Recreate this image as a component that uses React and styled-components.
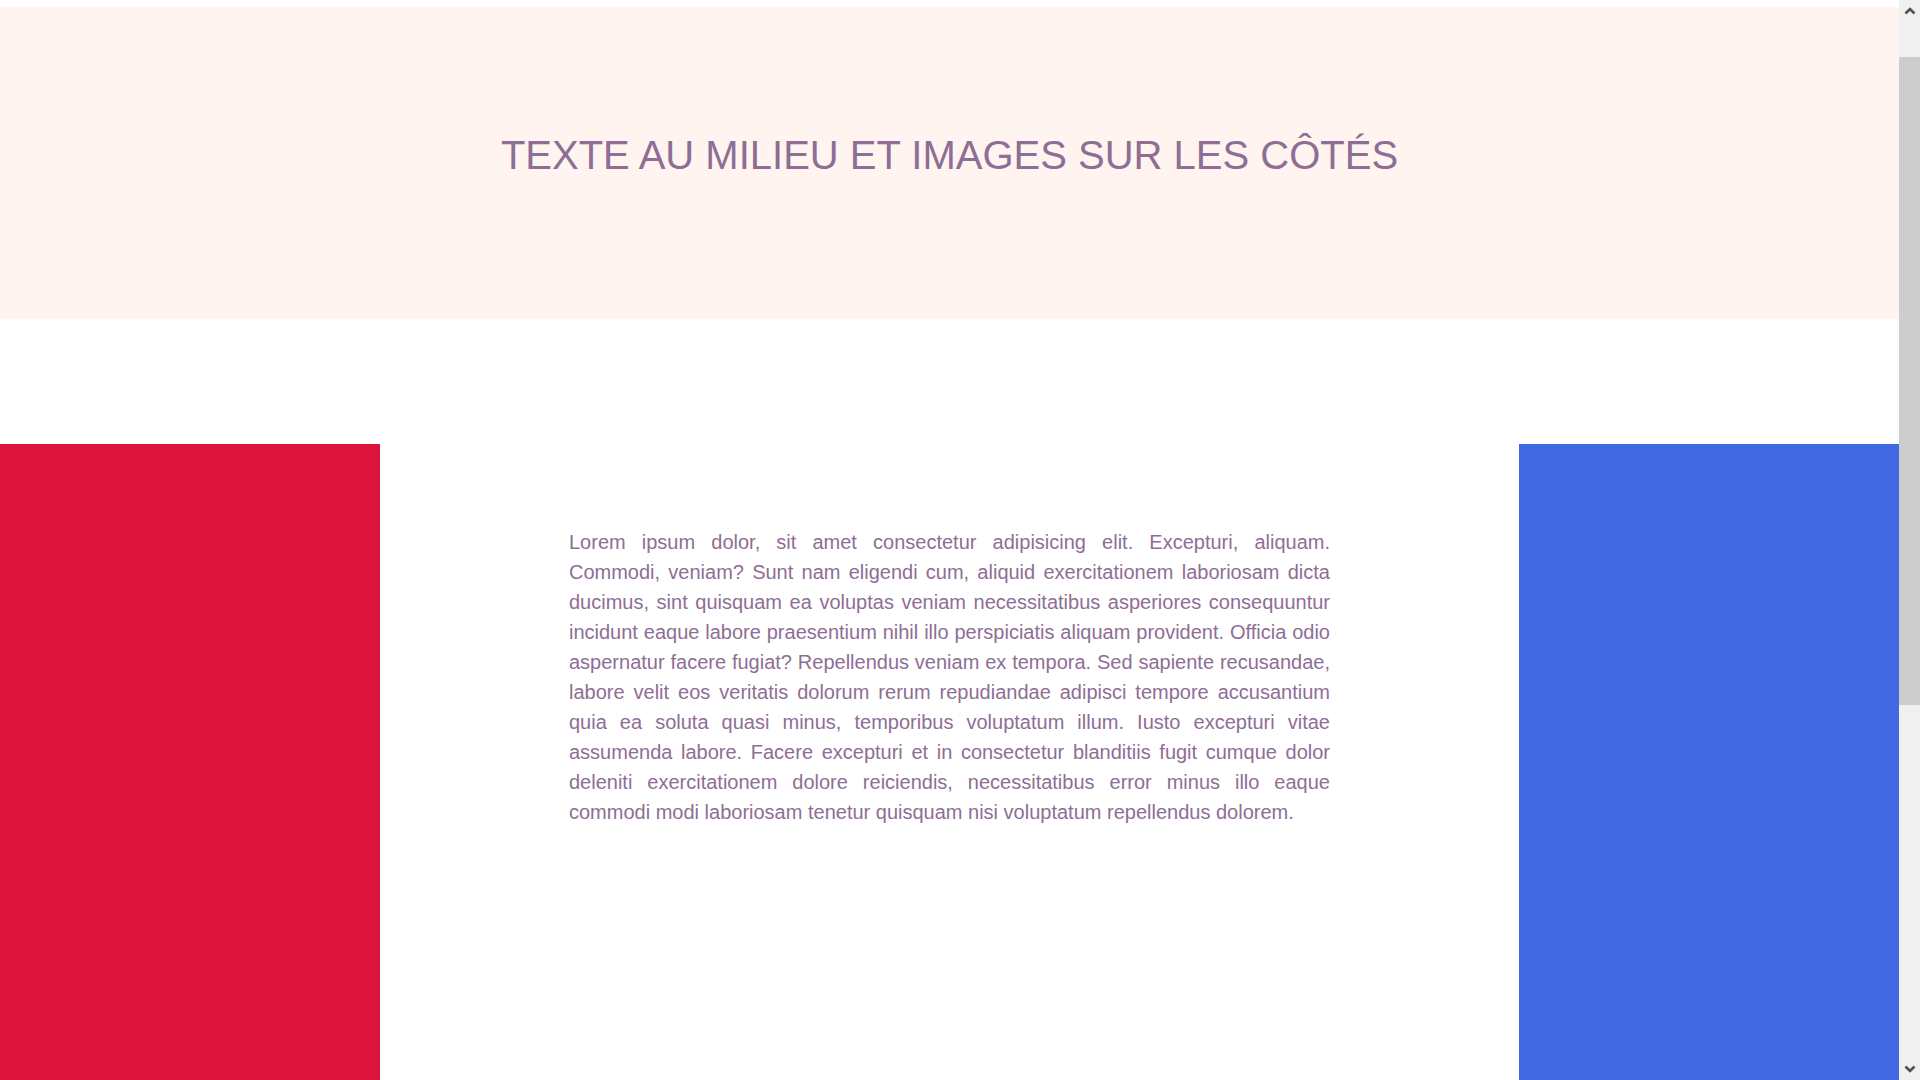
import React from "react";
import styled, { createGlobalStyle } from "styled-components";

const GlobalStyle = createGlobalStyle`
  html, body {
    margin: 0;
    padding: 0;
    background: #ffffff;
  }
  body {
    font-family: "Liberation Sans", Arial, sans-serif;
  }
  * {
    box-sizing: border-box;
  }
`;

const Page = styled.div`
  padding-top: 7px;
  margin-right: 21px;
`;

const Header = styled.header`
  height: 312px;
  background: #fff4ef;
  padding-top: 126px;
  text-align: center;
`;

const Title = styled.h1`
  margin: 0;
  font-size: 40px;
  font-weight: 400;
  line-height: normal;
  color: #8e6e95;
  font-family: "Liberation Sans", Arial, sans-serif;
`;

const Section = styled.section`
  margin-top: 125px;
  display: grid;
  grid-template-columns: 20% 60% 20%;
`;

const SideImage = styled.div`
  height: 1284px;
  background: ${(p) => p.$color};
`;

const Middle = styled.div`
  padding-top: 83px;
`;

const Text = styled.p`
  width: 761px;
  margin: 0 auto;
  font-size: 20px;
  line-height: 30px;
  color: #8e6e95;
  text-align: justify;
`;

const Scrollbar = styled.div`
  position: fixed;
  top: 0;
  right: 0;
  width: 21px;
  height: 100vh;
  background: #f0f0f0;
  display: flex;
  flex-direction: column;
  align-items: stretch;
`;

const ScrollButton = styled.div`
  height: 21px;
  display: flex;
  align-items: center;
  justify-content: center;
  color: #505050;
`;

const ScrollTrack = styled.div`
  flex: 1;
  padding-top: 36px;
`;

const ScrollThumb = styled.div`
  height: 648px;
  background: #cdcdcd;
`;

function Chevron({ up }) {
  return (
    <svg width="12" height="9" viewBox="0 0 12 9">
      <polyline
        points={up ? "1.5,7.5 6,3 10.5,7.5" : "1.5,1.5 6,6 10.5,1.5"}
        fill="none"
        stroke="currentColor"
        strokeWidth="2.6"
      />
    </svg>
  );
}

export default function App() {
  return (
    <>
      <GlobalStyle />
      <Page>
        <Header>
          <Title>TEXTE AU MILIEU ET IMAGES SUR LES CÔTÉS</Title>
        </Header>
        <Section>
          <SideImage $color="#dc143c" />
          <Middle>
            <Text>
              Lorem ipsum dolor, sit amet consectetur adipisicing elit. Excepturi, aliquam.
              Commodi, veniam? Sunt nam eligendi cum, aliquid exercitationem laboriosam dicta
              ducimus, sint quisquam ea voluptas veniam necessitatibus asperiores consequuntur
              incidunt eaque labore praesentium nihil illo perspiciatis aliquam provident. Officia
              odio aspernatur facere fugiat? Repellendus veniam ex tempora. Sed sapiente
              recusandae, labore velit eos veritatis dolorum rerum repudiandae adipisci tempore
              accusantium quia ea soluta quasi minus, temporibus voluptatum illum. Iusto excepturi
              vitae assumenda labore. Facere excepturi et in consectetur blanditiis fugit cumque
              dolor deleniti exercitationem dolore reiciendis, necessitatibus error minus illo
              eaque commodi modi laboriosam tenetur quisquam nisi voluptatum repellendus dolorem.
            </Text>
          </Middle>
          <SideImage $color="#4169e1" />
        </Section>
      </Page>
      <Scrollbar aria-hidden="true">
        <ScrollButton>
          <Chevron up />
        </ScrollButton>
        <ScrollTrack>
          <ScrollThumb />
        </ScrollTrack>
        <ScrollButton>
          <Chevron />
        </ScrollButton>
      </Scrollbar>
    </>
  );
}
